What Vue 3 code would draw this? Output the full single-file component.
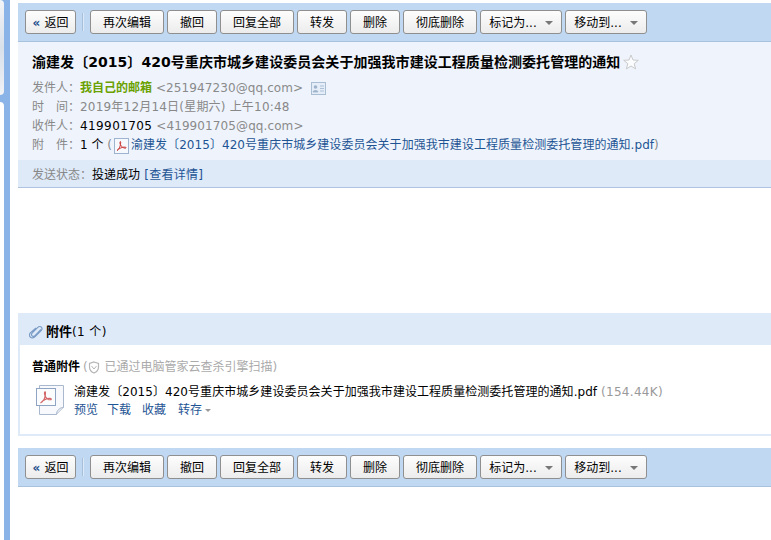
<script setup>
const buttons = [
  { label: '再次编辑', w: 74 },
  { label: '撤回', w: 50 },
  { label: '回复全部', w: 74 },
  { label: '转发', w: 50 },
  { label: '删除', w: 50 },
  { label: '彻底删除', w: 74 },
  { label: '标记为...', w: 82, menu: true },
  { label: '移动到...', w: 82, menu: true }
]
const subject = '渝建发〔2015〕420号重庆市城乡建设委员会关于加强我市建设工程质量检测委托管理的通知'
</script>

<template>
  <div class="page">
    <div class="rail">
      <div class="panel panel-a"></div>
      <div class="panel panel-b"></div>
    </div>
    <main class="mail">
      <div class="toolbar">
        <button class="btn back"><span class="raquo">«</span> 返回</button>
        <span class="sep"></span>
        <div class="btn-group">
          <button v-for="b in buttons" :key="b.label" class="btn" :class="{ menu: b.menu }" :style="{ width: b.w + 'px' }">
            {{ b.label }}<i v-if="b.menu" class="caret"></i>
          </button>
        </div>
      </div>

      <header class="head">
        <h1 class="subject">
          {{ subject }}
          <svg class="star" width="16" height="16" viewBox="0 0 16 16"><path d="M8 1l2 5 5.300.3-4.100 3.400 1.400 5.200L8 12l-4.600 2.900 1.400-5.200L.7 6.300 6 6z" fill="#fbfcfe" stroke="#c9c9c9" /></svg>
        </h1>
        <div class="meta">
          <div class="row"><span class="k">发件人：</span><b class="sender">我自己的邮箱</b><span class="addr"> &lt;251947230@qq.com&gt;</span>
            <svg class="card" width="15" height="13" viewBox="0 0 15 13"><rect x=".5" y=".5" width="14" height="12" fill="#e4edf8" stroke="#a9bdd3" /><circle cx="4.500" cy="5" r="1.800" fill="#9fb4cb" /><path d="M2 10c0-2 5-2 5 0zM9 4h4M9 6.500h4M9 9h4" fill="#9fb4cb" stroke="#9fb4cb" stroke-width=".8" /></svg>
          </div>
          <div class="row"><span class="k">时　间：</span><span class="gray date">2019年12月14日(星期六) 上午10:48</span></div>
          <div class="row"><span class="k">收件人：</span><span class="dark num">419901705</span><span class="addr"> &lt;419901705@qq.com&gt;</span></div>
          <div class="row"><span class="k">附　件：</span><span class="dark">1 个</span><span class="gray"> (</span>
            <svg class="pdf-s" width="15" height="16" viewBox="0 0 15 16"><rect x=".5" y=".5" width="14" height="15" fill="#f5f8fd" stroke="#9db3d0" /><path d="M3 12.500c2-1 4-5 3.700-8.500-.2-1.200-1.400 0-.4 2.500.9 2.200 3 3.700 5.200 3.700 1 0 .8-1.200-.6-1.100C8.500 8.800 5 10.500 3 12.500z" fill="none" stroke="#cc3a3a" stroke-width="1" /></svg>
            <a class="link tracked">{{ subject }}.pdf</a><span class="gray">)</span>
          </div>
        </div>
      </header>
      <div class="status"><span class="k">发送状态：</span><span class="dark">投递成功</span><a class="link detail"> [查看详情]</a></div>

      <div class="body"></div>

      <section class="attach">
        <div class="attach-title">
          <svg width="14" height="14" viewBox="0 0 14 14"><path d="M12 4.500 6 10.600c-1 1-2.400.9-3 .2-.8-.8-.6-2 .3-2.900l5.500-5.500c1.400-1.400 3-.9 3.600-.2.800.8.800 2.200-.3 3.400l-6 6.100c-1.500 1.500-3.700 1.500-4.800.4-1.200-1.200-1.100-3 .3-4.500L7 3" fill="none" stroke="#7a9cc6" stroke-width="1.200" /></svg>
          <b>附件</b><span class="count">(1 个)</span>
        </div>
        <div class="attach-box">
          <div class="attach-type">
            <b>普通附件</b>
            <span class="scan">(<svg width="12" height="13" viewBox="0 0 12 13"><path d="M6 1l4.500 1.500V6c0 3-2 5-4.500 6C3.500 11 1.500 9 1.500 6V2.500z" fill="none" stroke="#b5b5b5" stroke-width="1.200" /><path d="M3.500 5 6 8l2.500-3" fill="none" stroke="#b5b5b5" /></svg> 已通过电脑管家云查杀引擎扫描)</span>
          </div>
          <div class="file">
            <svg class="pdf-l" width="28" height="32" viewBox="0 0 28 32">
              <path d="M3.500 1.500h24v22l-7 7h-17z" fill="#f7f9fc" stroke="#a9b8cc" />
              <path d="M20.500 30.500c0-4 3-7 7-7" fill="#e3e8ef" stroke="#a9b8cc" />
              <rect x=".5" y="4.500" width="19" height="17" fill="#fbfcfe" stroke="#8ea4c2" />
              <path d="M4.500 19c2.800-1.300 5.500-6 5-10.700-.3-1.400-1.800-.2-.7 2.900 1.100 2.800 3.300 4.600 5.700 4.600 1.300 0 1-1.500-.9-1.400-2.800.1-6.900 2.200-9.100 4.600z" fill="none" stroke="#d4686a" stroke-width="1.100" />
            </svg>
            <div class="file-info">
              <div class="file-name tracked">{{ subject }}.pdf <span class="size">(154.44K)</span></div>
              <div class="file-actions"><a class="link">预览</a><a class="link">下载</a><a class="link">收藏</a><a class="link">转存<i class="caret small"></i></a></div>
            </div>
          </div>
        </div>
      </section>

      <div class="toolbar lower">
        <button class="btn back"><span class="raquo">«</span> 返回</button>
        <span class="sep"></span>
        <div class="btn-group">
          <button v-for="b in buttons" :key="b.label" class="btn" :class="{ menu: b.menu }" :style="{ width: b.w + 'px' }">
            {{ b.label }}<i v-if="b.menu" class="caret"></i>
          </button>
        </div>
      </div>
    </main>
  </div>
</template>

<style>
html, body { margin: 0; background: #fff; overflow: hidden; }
</style>

<style scoped>
.page {
  display: flex;
  height: 540px;
  overflow: hidden;
  font: 12px/16px "DejaVu Sans", "Noto Sans CJK SC", sans-serif;
  color: #000;
  background: #fff;
}
.rail {
  width: 10px;
  flex: none;
  background: #8ab3e8;
  overflow: hidden;
  display: flex;
  flex-direction: column;
  gap: 7px;
}
.panel {
  width: 4px;
  border-radius: 0 4px 4px 0;
}
.panel-a {
  height: 95px;
  background: linear-gradient(160deg, #f4f5f7, #d8e0ea 50%, #f1f3f6);
}
.panel-b { flex: 1; background: #fff; border-radius: 0 4px 0 0; }
.mail {
  flex: 1;
  min-width: 0;
  margin-left: 8px;
  padding-top: 3px;
}
.toolbar {
  display: flex;
  align-items: center;
  height: 38px;
  padding-left: 7px;
  background: #c1d8f2;
  border-bottom: 1px solid #a8c1dd;
}
.btn-group { display: flex; gap: 3px; }
.btn {
  height: 24px;
  padding: 2px 0 0;
  border: 1px solid #8f8f8f;
  border-radius: 3px;
  background: linear-gradient(#fdfdfd, #ececec);
  font: inherit;
  color: #000;
  display: flex;
  align-items: center;
  justify-content: center;
  box-sizing: border-box;
}
.back { width: 51px; gap: 4px; }
.raquo { color: #1e4f8c; font-weight: bold; }
.sep {
  width: 1px;
  height: 18px;
  background: #a7bfd9;
  border-right: 1px solid #dbe8f7;
  margin: 0 6px;
}
.caret {
  display: inline-block;
  width: 0;
  height: 0;
  margin-left: 8px;
  border: 4px solid transparent;
  border-top-color: #777;
  border-bottom-width: 0;
}
.caret.small { margin-left: 3px; border-width: 3.500px 3.500px 0; border-top-color: #999; vertical-align: middle; }
.head {
  background: #eff4fc;
  height: 118px;
  box-sizing: border-box;
  padding: 10px 14px 0;
}
.subject {
  margin: 0;
  font-size: 14px;
  font-weight: bold;
  line-height: 20px;
  display: flex;
  align-items: center;
  white-space: nowrap;
  letter-spacing: .05px;
}
.star { margin-left: 3px; }
.meta { margin-top: 7px; }
.row {
  height: 19px;
  line-height: 19px;
  display: flex;
  align-items: center;
  white-space: pre;
}
.k, .gray { color: #888; }
.addr { color: #8a8a8a; letter-spacing: .1px; }
.date { letter-spacing: .2px; }
.num { letter-spacing: .4px; }
.tracked { letter-spacing: .05px; }
.sender { color: #6aa100; font-weight: bold; font-size: 12px; }
.card { margin-left: 8px; }
.pdf-s { margin: 0 2px; }
.link { color: #1e5494; cursor: pointer; }
.detail { letter-spacing: .3px; }
.status {
  height: 28px;
  line-height: 28px;
  padding: 1px 0 0 14px;
  background: #dfeaf9;
  border-bottom: 1px solid #aec3df;
  box-sizing: border-box;
  white-space: pre;
}
.body { height: 125px; }
.attach { white-space: nowrap; }
.attach-title {
  height: 32px;
  padding: 6px 0 0 11px;
  background: #dfeaf9;
  display: flex;
  align-items: center;
  box-sizing: border-box;
}
.attach-title b { font-size: 13px; margin-left: 3px; }
.count { letter-spacing: .4px; }
.attach-box {
  height: 91px;
  box-sizing: border-box;
  border: 2px solid #dfeaf9;
  border-width: 0 0 2px 2px;
  padding: 13px 0 0 12px;
}
.attach-type { display: flex; align-items: center; height: 18px; gap: 3px; }
.attach-type b { font-weight: bold; }
.scan { color: #aaa; display: flex; align-items: center; white-space: pre; }
.scan svg { margin: 0 1px 0 0; }
.file { display: flex; margin-top: 6px; padding-left: 4px; }
.pdf-l { flex: none; margin-top: 2px; }
.file-info { margin-left: 10px; margin-top: 1px; }
.file-name { line-height: 18px; }
.size { color: #999; letter-spacing: .3px; }
.file-actions { display: flex; line-height: 18px; align-items: center; }
.file-actions .link:nth-child(2) { margin-left: 9px; }
.file-actions .link:nth-child(3) { margin-left: 11px; }
.file-actions .link:nth-child(4) { margin-left: 12px; }
.lower { margin-top: 12px; }
</style>
